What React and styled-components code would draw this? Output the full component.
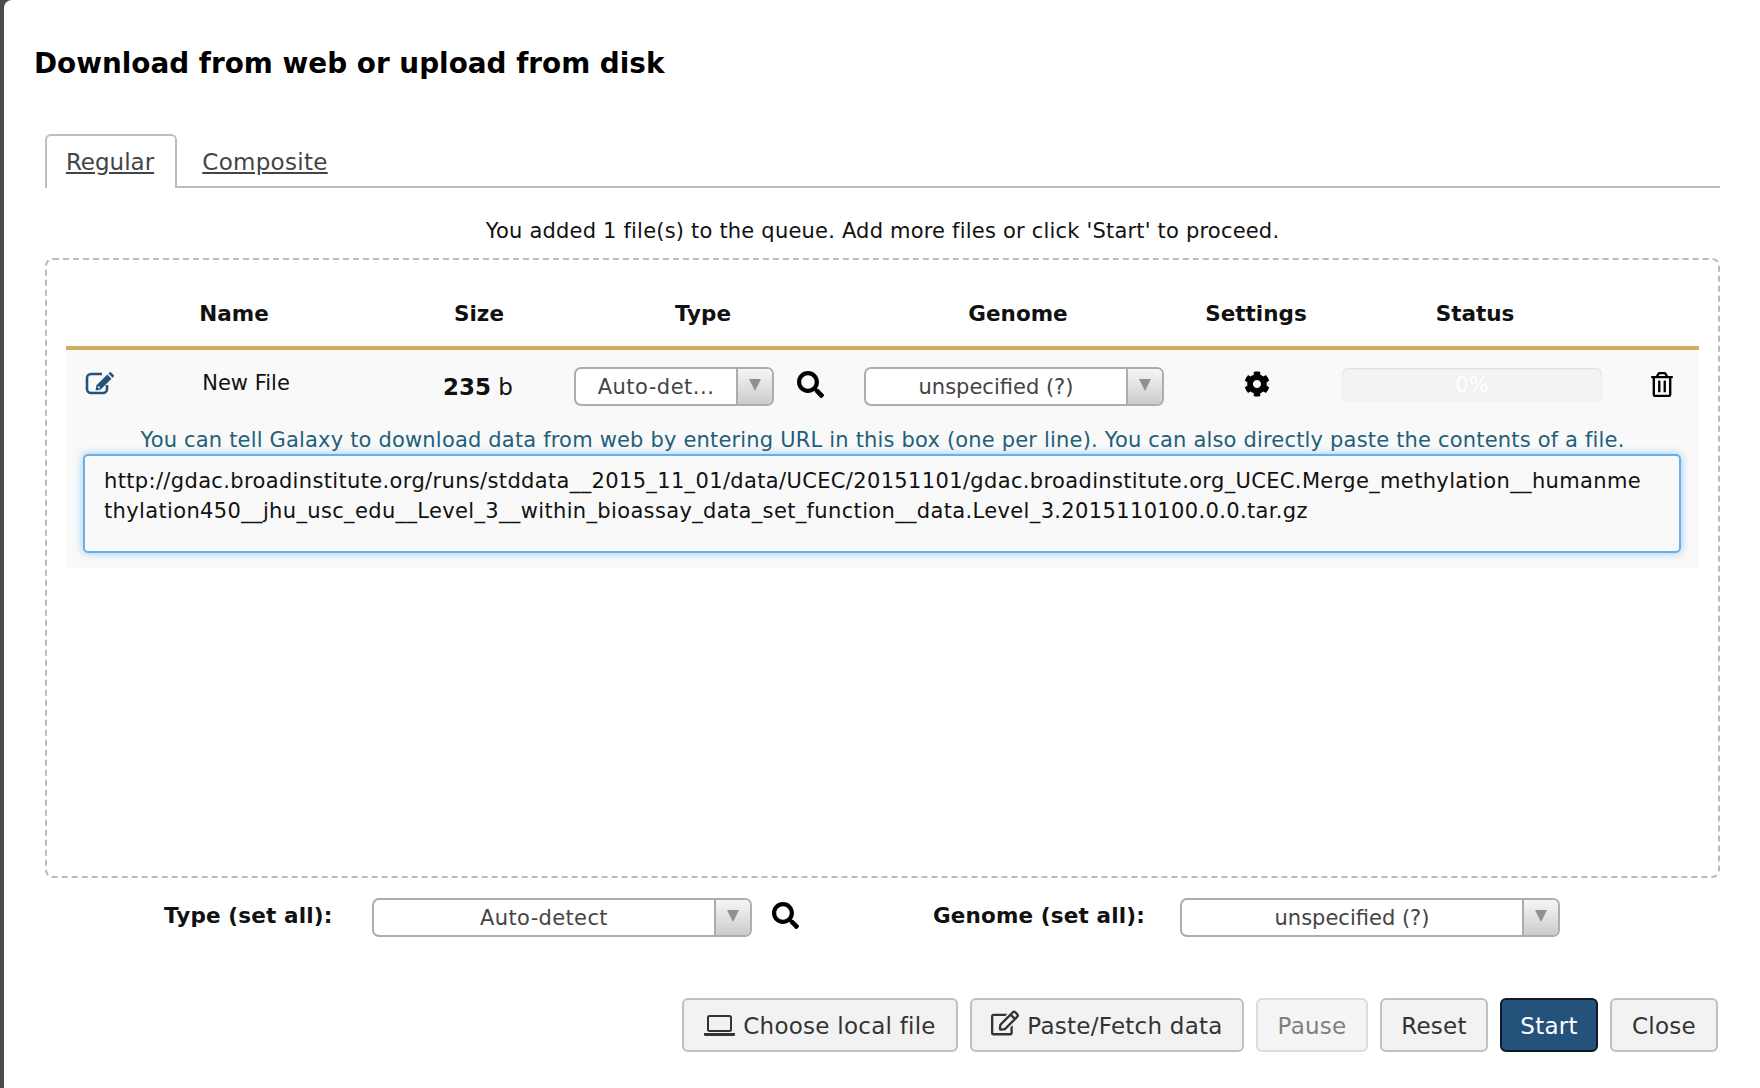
import React from 'react';
import styled, { createGlobalStyle } from 'styled-components';
import { FaRegEdit, FaSearch, FaCog, FaRegTrashAlt } from 'react-icons/fa';

const GlobalStyle = createGlobalStyle`
    html, body {
        margin: 0;
        padding: 0;
        background: #4b4b4b;
        overflow: hidden;
    }
    body {
        font-family: "DejaVu Sans", "Liberation Sans", sans-serif;
        font-size: 21px;
        color: #111;
    }
`

const Modal = styled.div`
    box-sizing: border-box;
    margin-left: 4px;
    height: 1088px;
    background: #fff;
    border-top-left-radius: 8px;
    padding: 40px 40px 0 41px;
`

const Title = styled.h4`
    margin: 0 0 48px -11px;
    font-size: 27.85px;
    line-height: 48px;
    height: 46px;
    font-weight: bold;
    color: #000;
`

const Tabs = styled.div`
    display: flex;
    height: 52px;
    border-bottom: 2px solid #bdbdbd;
`

const Tab = styled.a`
    box-sizing: border-box;
    width: ${p => p.$width}px;
    height: ${p => p.$active ? 54 : 52}px;
    text-align: center;
    line-height: 52px;
    font-size: 23px;
    letter-spacing: ${p => p.$active ? 0 : 0.3}px;
    padding-right: ${p => p.$active ? 2 : 0}px;
    color: #444;
    text-decoration: underline;
    border: 2px solid ${p => p.$active ? '#bdbdbd' : 'transparent'};
    border-bottom: ${p => p.$active ? 'none' : '2px solid transparent'};
    border-radius: 6px 6px 0 0;
    background: #fff;
`

const Message = styled.div`
    height: 30px;
    margin: 27px 0 13px;
    text-align: center;
    line-height: 32px;
    font-size: 21px;
    letter-spacing: 0.2px;
`

const Box = styled.div`
    box-sizing: border-box;
    height: 620px;
    padding: 0 19px;
    border: 2px dashed #bbb;
    border-radius: 8px;
`

const Header = styled.div`
    display: grid;
    grid-template-columns: 336px 154px 294px 336px 140px 298px 74px;
    box-sizing: border-box;
    height: 90px;
    padding-top: 20px;
    border-bottom: 4px solid #d3ae5f;
`

const HeaderCell = styled.div`
    text-align: center;
    line-height: 68px;
    font-size: 21.5px;
    font-weight: bold;
    color: #111;
`

const FileBlock = styled.div`
    box-sizing: border-box;
    height: 218px;
    padding: 17px 17px 15px;
    background: #f9f9f9;
`

const FileRow = styled.div`
    display: grid;
    grid-template-columns: 65px 192px 232px 250px 40px 300px 178px 260px auto;
    align-items: center;
    height: 39px;
    margin-left: 2px;
`

const EditGlyph = styled.svg`
    display: block;
    width: 29px;
    height: 23px;
    margin-top: -6px;
    color: #25527b;
`

const FileName = styled.div`
    text-align: center;
    font-size: 21px;
    margin-top: -8px;
`

const FileSize = styled.div`
    text-align: center;
    padding-left: 40px;
    font-size: 23px;
    strong { font-weight: bold; }
`

const TypeCell = styled.div`
    display: flex;
    align-items: center;
    gap: 23px;
`

const SelectBox = styled.div`
    box-sizing: border-box;
    display: flex;
    width: ${p => p.$width}px;
    height: 39px;
    border: 2px solid #adadad;
    border-radius: 7px;
    background: #fff;
    overflow: hidden;
`

const SelectValue = styled.div`
    flex: 1;
    text-align: center;
    line-height: 37px;
    font-size: 21px;
    letter-spacing: ${p => p.$spacing || 0}px;
    color: #444;
    white-space: nowrap;
`

const SelectArrow = styled.div`
    display: flex;
    align-items: center;
    justify-content: center;
    width: 34px;
    border-left: 2px solid #adadad;
    background: linear-gradient(#f6f6f6, #cbcbcb);
    &::after {
        content: '';
        margin-top: -3px;
        border-left: 6px solid transparent;
        border-right: 6px solid transparent;
        border-top: 12px solid #8f8f8f;
    }
`

const SearchIcon = styled(FaSearch)`
    width: 27px;
    height: 27px;
    color: #000;
    flex: none;
    margin-top: -4px;
`

const GearCell = styled.div`
    padding-left: 80px;
    display: flex;
`

const GearIcon = styled(FaCog)`
    width: 26px;
    height: 26px;
    color: #000;
    margin-top: -5px;
`

const Progress = styled.div`
    box-sizing: border-box;
    height: 34px;
    margin-top: -3px;
    border-radius: 6px;
    background: #f3f3f3;
    box-shadow: inset 0 1px 2px rgba(0,0,0,.1);
    text-align: center;
    line-height: 34px;
    font-size: 21px;
    color: #fff;
`

const TrashCell = styled.div`
    padding-left: 49px;
    display: flex;
`

const TrashIcon = styled(FaRegTrashAlt)`
    width: 22px;
    height: 25px;
    color: #000;
    margin-top: -5px;
`

const Hint = styled.div`
    height: 30px;
    margin-top: 18px;
    text-align: center;
    line-height: 32px;
    font-size: 21px;
    letter-spacing: 0.18px;
    color: #22607a;
    white-space: nowrap;
`

const UrlBox = styled.textarea`
    display: block;
    box-sizing: border-box;
    width: 1598px;
    height: 99px;
    padding: 10px 19px;
    border: 2px solid #68b0ea;
    border-radius: 5px;
    background: #f9f9f9;
    box-shadow: 0 0 8px rgba(82,168,236,.6);
    font-family: inherit;
    font-size: 21px;
    line-height: 30px;
    letter-spacing: 0.35px;
    color: #111;
    resize: none;
    outline: none;
    overflow: hidden;
    word-break: break-all;
`

const SetAllRow = styled.div`
    display: flex;
    align-items: center;
    height: 39px;
    margin-top: 20px;
    padding-left: 119px;
`

const SetAllLabel = styled.div`
    width: ${p => p.$width}px;
    font-size: 21.5px;
    letter-spacing: 0.15px;
    font-weight: bold;
    color: #111;
    white-space: nowrap;
    margin-top: -5px;
`

const SearchGap = styled.div`
    display: flex;
    margin: 0 134px 0 20px;
`

const Actions = styled.div`
    display: flex;
    justify-content: flex-end;
    gap: 12px;
    margin-top: 61px;
    padding-right: 2px;
`

const Button = styled.button`
    box-sizing: border-box;
    display: flex;
    align-items: center;
    justify-content: center;
    gap: 8px;
    width: ${p => p.$width}px;
    height: 54px;
    padding: 2px 0 0;
    border: 2px solid ${p => p.$primary ? '#0d1b28' : p.$disabled ? '#dcdcdc' : '#c0c0c0'};
    border-radius: 6px;
    background: ${p => p.$primary ? '#25527b' : p.$disabled ? '#f5f5f5' : '#f2f2f2'};
    color: ${p => p.$primary ? '#fff' : p.$disabled ? '#808080' : '#333'};
    font-family: inherit;
    font-size: 23px;
    letter-spacing: 0.25px;
    svg { flex: none; }
`

const ButtonEdit = styled(FaRegEdit)`
    width: 28px;
    height: 26px;
    color: #333;
    margin-top: -6px;
`

const Laptop = () => (
    <svg width="31" height="22" viewBox="0 0 31 22" fill="none">
        <rect x="4" y="1" width="23" height="15" rx="1.5" stroke="#333" strokeWidth="2" />
        <path d="M0 18h31v1.5a1.5 1.5 0 0 1-1.5 1.5h-28A1.5 1.5 0 0 1 0 19.5z" fill="#333" />
    </svg>
)

const EditMark = () => (
    <EditGlyph viewBox="0 0 29 23" fill="none">
        <path d="M17 2H6a4 4 0 0 0-4 4v11a4 4 0 0 0 4 4h12a4 4 0 0 0 4-4v-4" stroke="currentColor" strokeWidth="2.6" />
        <path d="M10.5 18.5l1-5.2L22.3 2.6l4.2 4.2L15.7 17.5z" fill="currentColor" />
        <path d="M23.4 1.5l1-1a1.2 1.2 0 0 1 1.7 0l2.5 2.5a1.2 1.2 0 0 1 0 1.7l-1 1z" fill="currentColor" />
        <path d="M13 14.5l1.7 1.7" stroke="#f9f9f9" strokeWidth="1.4" />
    </EditGlyph>
)

const url = 'http://gdac.broadinstitute.org/runs/stddata__2015_11_01/data/UCEC/20151101/gdac.broadinstitute.org_UCEC.Merge_methylation__humanme\nthylation450__jhu_usc_edu__Level_3__within_bioassay_data_set_function__data.Level_3.2015110100.0.0.tar.gz'

const Select = ({ width, value, spacing }) => (
    <SelectBox $width={width}>
        <SelectValue $spacing={spacing}>{value}</SelectValue>
        <SelectArrow />
    </SelectBox>
)

const App = () => {
    const columns = ['Name', 'Size', 'Type', 'Genome', 'Settings', 'Status', '']

    return (
        <>
            <GlobalStyle />
            <Modal>
                <Title>Download from web or upload from disk</Title>
                <Tabs>
                    <Tab $active $width={132}>Regular</Tab>
                    <Tab $width={176}>Composite</Tab>
                </Tabs>
                <Message>You added 1 file(s) to the queue. Add more files or click 'Start' to proceed.</Message>
                <Box>
                    <Header>
                        {columns.map((col, index) => <HeaderCell key={index}>{col}</HeaderCell>)}
                    </Header>
                    <FileBlock>
                        <FileRow>
                            <EditMark />
                            <FileName>New File</FileName>
                            <FileSize><strong>235</strong> b</FileSize>
                            <TypeCell>
                                <Select width={200} value="Auto-det..." spacing={0.5} />
                                <SearchIcon />
                            </TypeCell>
                            <div />
                            <Select width={300} value="unspecified (?)" />
                            <GearCell><GearIcon /></GearCell>
                            <Progress>0%</Progress>
                            <TrashCell><TrashIcon /></TrashCell>
                        </FileRow>
                        <Hint>You can tell Galaxy to download data from web by entering URL in this box (one per line). You can also directly paste the contents of a file.</Hint>
                        <UrlBox readOnly value={url} />
                    </FileBlock>
                </Box>
                <SetAllRow>
                    <SetAllLabel $width={208}>Type (set all):</SetAllLabel>
                    <Select width={380} value="Auto-detect" spacing={0.35} />
                    <SearchGap><SearchIcon /></SearchGap>
                    <SetAllLabel $width={247}>Genome (set all):</SetAllLabel>
                    <Select width={380} value="unspecified (?)" />
                </SetAllRow>
                <Actions>
                    <Button $width={276}><Laptop />Choose local file</Button>
                    <Button $width={274}><ButtonEdit />Paste/Fetch data</Button>
                    <Button $width={112} $disabled>Pause</Button>
                    <Button $width={108}>Reset</Button>
                    <Button $width={98} $primary>Start</Button>
                    <Button $width={108}>Close</Button>
                </Actions>
            </Modal>
        </>
    );
}

export default App;
